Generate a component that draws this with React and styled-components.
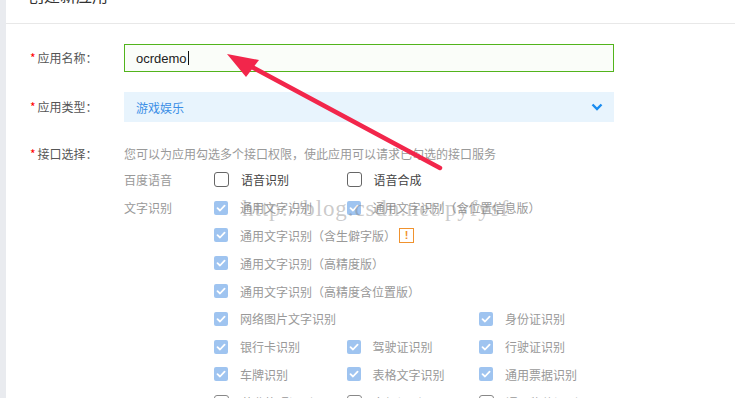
import React from 'react';
import styled, { createGlobalStyle } from 'styled-components';

const GlobalStyle = createGlobalStyle`
  html, body {
    margin: 0;
    padding: 0;
    background: #fff;
    font-family: "Noto Sans CJK SC", "Noto Sans", sans-serif;
    overflow: hidden;
  }
  * { box-sizing: border-box; }
`;

const ocrRows = [
  [{ text: '通用文字识别', span: 1 }, { text: '通用文字识别（含位置信息版）', span: 2 }],
  [{ text: '通用文字识别（含生僻字版）', span: 3, warn: true }],
  [{ text: '通用文字识别（高精度版）', span: 3 }],
  [{ text: '通用文字识别（高精度含位置版）', span: 3 }],
  [{ text: '网络图片文字识别', span: 2 }, { text: '身份证识别', span: 1 }],
  [{ text: '银行卡识别' }, { text: '驾驶证识别' }, { text: '行驶证识别' }],
  [{ text: '车牌识别' }, { text: '表格文字识别' }, { text: '通用票据识别' }],
];

const lastRow = ['营业执照识别', '车辆识别', '通用物体识别'];

function Check({ checked, strong }) {
  if (!checked) return <EmptyBox $strong={strong} />;
  return (
    <CheckedBox>
      <svg width="10" height="8" viewBox="0 0 10 8">
        <path d="M1.5 4.2 L4 6.5 L8.6 1.6" fill="none" stroke="#fff" strokeWidth="1.8" strokeLinecap="round" strokeLinejoin="round" />
      </svg>
    </CheckedBox>
  );
}

export default function App() {
  return (
    <Page>
      <GlobalStyle />
      <SideStrip />
      <Main>
        <Header>
          <Title>创建新应用</Title>
        </Header>
        <Form>
          <FormRow $gap={20}>
            <Label><Star>*</Star>应用名称：</Label>
            <TextInput>ocrdemo<Caret /></TextInput>
          </FormRow>
          <FormRow $gap={22}>
            <Label $h={30}><Star>*</Star>应用类型：</Label>
            <Select>
              <span>游戏娱乐</span>
              <svg width="12" height="8" viewBox="0 0 12 8">
                <path d="M1.5 1.5 L6 6 L10.5 1.5" fill="none" stroke="#1a8cf0" strokeWidth="2.4" strokeLinejoin="miter" />
              </svg>
            </Select>
          </FormRow>
          <FormRow>
            <Label $h={20}><Star>*</Star>接口选择：</Label>
            <Apis>
              <Hint>您可以为应用勾选多个接口权限，使此应用可以请求已勾选的接口服务</Hint>
              <Category>
                <CatName>百度语音</CatName>
                <Grid>
                  <Item><Check strong /><ItemText $dark>语音识别</ItemText></Item>
                  <Item><Check strong /><ItemText $dark>语音合成</ItemText></Item>
                </Grid>
              </Category>
              <Category>
                <CatName>文字识别</CatName>
                <Grid>
                  {ocrRows.map((row, i) =>
                    row.map((it, j) => (
                      <Item key={i + '-' + j} $span={it.span || 1}>
                        <Check checked />
                        <ItemText>{it.text}</ItemText>
                        {it.warn && <Warn>!</Warn>}
                      </Item>
                    ))
                  )}
                  {lastRow.map((t) => (
                    <Item key={t}><Check /><ItemText>{t}</ItemText></Item>
                  ))}
                </Grid>
              </Category>
            </Apis>
          </FormRow>
        </Form>
      </Main>
      <Watermark>http://blog.csdn.net/pyfysf</Watermark>
      <ArrowLayer width="735" height="398" viewBox="0 0 735 398">
        <line x1="440" y1="168" x2="250" y2="66" stroke="#f2264b" strokeWidth="4.5" strokeLinecap="round" />
        <polygon points="227,54 259,60 246,77" fill="#f2264b" />
      </ArrowLayer>
    </Page>
  );
}

const Page = styled.div`
  position: relative;
  display: flex;
  width: 735px;
  height: 398px;
  overflow: hidden;
`;
const SideStrip = styled.div`
  width: 6px;
  flex-shrink: 0;
  background: #e9ebef;
`;
const Main = styled.div`
  flex: 1;
  display: flex;
  flex-direction: column;
  min-height: 0;
`;
const Header = styled.div`
  flex-shrink: 0;
  height: 24px;
  border-bottom: 1px solid #e8e8e8;
  padding-left: 22px;
  overflow: hidden;
`;
const Title = styled.div`
  font-size: 16px;
  line-height: 16px;
  color: #333;
  margin-top: -13px;
`;
const Form = styled.div`
  flex-shrink: 0;
  padding: 20px 0 0 24px;
`;
const FormRow = styled.div`
  display: flex;
  align-items: flex-start;
  margin-bottom: ${(p) => p.$gap || 0}px;
`;
const Label = styled.div`
  width: 94px;
  flex-shrink: 0;
  font-size: 12px;
  line-height: ${(p) => p.$h || 28}px;
  color: #555;
`;
const Star = styled.span`
  color: #f00;
  margin-right: 2px;
`;
const TextInput = styled.div`
  width: 490px;
  height: 28px;
  border: 1px solid #52b41c;
  background: #fafdf9;
  padding-left: 11px;
  display: flex;
  align-items: center;
  font-family: "Liberation Sans", Arial, sans-serif;
  font-size: 13px;
  color: #222;
`;
const Caret = styled.span`
  display: inline-block;
  width: 1px;
  height: 14px;
  background: #111;
  margin-left: 1px;
`;
const Select = styled.div`
  width: 490px;
  height: 30px;
  background: #e8f4fd;
  padding: 0 11px 0 12px;
  display: flex;
  align-items: center;
  justify-content: space-between;
  font-size: 12px;
  color: #3a8ee6;
`;
const Apis = styled.div`
  display: flex;
  flex-direction: column;
`;
const Hint = styled.div`
  font-size: 12px;
  line-height: 20px;
  color: #999;
  margin-bottom: 2px;
`;
const Category = styled.div`
  display: flex;
  align-items: flex-start;
`;
const CatName = styled.div`
  width: 90px;
  flex-shrink: 0;
  font-size: 12px;
  line-height: 27.8px;
  color: #999;
`;
const Grid = styled.div`
  display: grid;
  grid-template-columns: repeat(3, 132.5px);
  grid-auto-rows: 27.8px;
`;
const Item = styled.div`
  grid-column: span ${(p) => p.$span || 1};
  display: flex;
  align-items: center;
  white-space: nowrap;
`;
const EmptyBox = styled.span`
  width: 15px;
  height: 15px;
  flex-shrink: 0;
  border: 1.5px solid ${(p) => (p.$strong ? '#666' : '#888')};
  border-radius: 3px;
  background: #fff;
`;
const CheckedBox = styled.span`
  width: 14px;
  height: 14px;
  flex-shrink: 0;
  border-radius: 2px;
  background: #9fc4f0;
  display: flex;
  align-items: center;
  justify-content: center;
`;
const ItemText = styled.span`
  margin-left: 12px;
  font-size: 12px;
  color: ${(p) => (p.$dark ? '#444' : '#999')};
`;
const Warn = styled.span`
  margin-left: 3px;
  width: 15px;
  height: 15px;
  border: 1px solid #f0922e;
  color: #f0922e;
  font-family: "Liberation Sans", Arial, sans-serif;
  font-weight: bold;
  font-size: 11px;
  display: flex;
  align-items: center;
  justify-content: center;
`;
const Watermark = styled.div`
  position: absolute;
  left: 242px;
  top: 196px;
  font-family: "Liberation Serif", "DejaVu Serif", serif;
  font-size: 23px;
  letter-spacing: 0.9px;
  color: rgba(120, 120, 120, 0.4);
  pointer-events: none;
  white-space: nowrap;
`;
const ArrowLayer = styled.svg`
  position: absolute;
  left: 0;
  top: 0;
  pointer-events: none;
`;
